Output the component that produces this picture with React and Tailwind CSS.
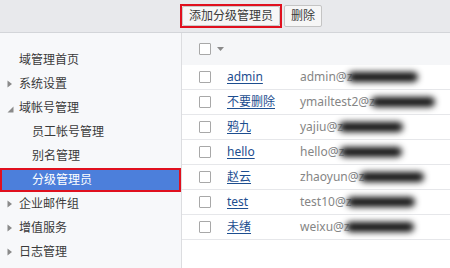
import React from 'react';

const menu = [
  { label: '域管理首页', level: 1 },
  { label: '系统设置', level: 1, arrow: 'right' },
  { label: '域帐号管理', level: 1, arrow: 'down' },
  { label: '员工帐号管理', level: 2 },
  { label: '别名管理', level: 2 },
  { label: '分级管理员', level: 2, active: true },
  { label: '企业邮件组', level: 1, arrow: 'right' },
  { label: '增值服务', level: 1, arrow: 'right' },
  { label: '日志管理', level: 1, arrow: 'right' },
];

const rows = [
  { name: 'admin', mail: 'admin@', blur: 70 },
  { name: '不要删除', mail: 'ymailtest2@', blur: 64 },
  { name: '鸦九', mail: 'yajiu@', blur: 64 },
  { name: 'hello', mail: 'hello@', blur: 62 },
  { name: '赵云', mail: 'zhaoyun@', blur: 64 },
  { name: 'test', mail: 'test10@', blur: 68 },
  { name: '未绪', mail: 'weixu@', blur: 68 },
];

function Arrow({ dir }) {
  if (dir === 'right') {
    return (
      <svg width="6" height="8" viewBox="0 0 6 8" className="mr-[6px]">
        <path d="M0.5 0.5 L5 4 L0.5 7.5 Z" fill="#8a8a8a" />
      </svg>
    );
  }
  return (
    <svg width="7" height="7" viewBox="0 0 7 7" className="mr-[5px] mt-[2px]">
      <path d="M6.5 0.5 L6.5 6.5 L0.5 6.5 Z" fill="#8a8a8a" />
    </svg>
  );
}

function Checkbox() {
  return <span className="inline-block w-[12px] h-[12px] border border-[#a8a8a8] bg-white rounded-[1px]" />;
}

export default function App() {
  return (
    <div
      className="w-[450px] h-[268px] overflow-hidden bg-white text-[12px] text-[#3a3a3a]"
      style={{ fontFamily: '"Noto Sans", "Noto Sans CJK SC", sans-serif' }}
    >
      {/* toolbar */}
      <div className="h-[33px] bg-[#e8e9ec] border-b border-[#d3d5d9] flex items-center pl-[180px] gap-[2px]">
        <div className="border-2 border-[#e0101e]">
          <button className="h-[20px] px-[6px] bg-[#f6f6f6] border border-[#c9c9c9] rounded-[2px] leading-none text-[#3a3a3a]">
            添加分级管理员
          </button>
        </div>
        <button className="h-[22px] px-[6px] bg-[#f6f6f6] border border-[#c4c4c4] rounded-[2px] leading-none text-[#3a3a3a]">
          删除
        </button>
      </div>

      <div className="flex h-[235px]">
        {/* sidebar */}
        <div className="w-[182px] bg-[#f7f8fa] border-r border-[#dcdde0] pt-[15px] shrink-0">
          {menu.map((m) =>
            m.active ? (
              <div
                key={m.label}
                className="h-[24px] flex items-center bg-[#4c7fdb] border-2 border-[#e0101e] pl-[30px] text-white"
              >
                {m.label}
              </div>
            ) : (
              <div
                key={m.label}
                className={`h-[24px] flex items-center ${m.level === 2 ? 'pl-[32px]' : m.arrow ? 'pl-[7px]' : 'pl-[19px]'}`}
              >
                {m.arrow && <Arrow dir={m.arrow} />}
                {m.label}
              </div>
            )
          )}
        </div>

        {/* table */}
        <div className="flex-1 flex flex-col">
          <div className="h-[32px] bg-[#f5f6f8] flex items-center pl-[17px]">
            <Checkbox />
            <svg width="7" height="4" viewBox="0 0 7 4" className="ml-[6px]">
              <path d="M0 0 L7 0 L3.5 4 Z" fill="#8a8a8a" />
            </svg>
          </div>
          {rows.map((r) => (
            <div key={r.name} className="h-[25px] border-b border-[#e6e7ea] flex items-center pl-[17px]">
              <Checkbox />
              <span className="ml-[16px] w-[73px] text-[#1d4e8f] underline underline-offset-2">{r.name}</span>
              <span className="text-[#858585] flex items-center">
                {r.mail}
                <span className="text-[#aaa]">z</span>
                <span
                  className="inline-block h-[10px] bg-[#111] rounded-full blur-[3px] -ml-[4px]"
                  style={{ width: r.blur }}
                />
              </span>
            </div>
          ))}
        </div>
      </div>
    </div>
  );
}
